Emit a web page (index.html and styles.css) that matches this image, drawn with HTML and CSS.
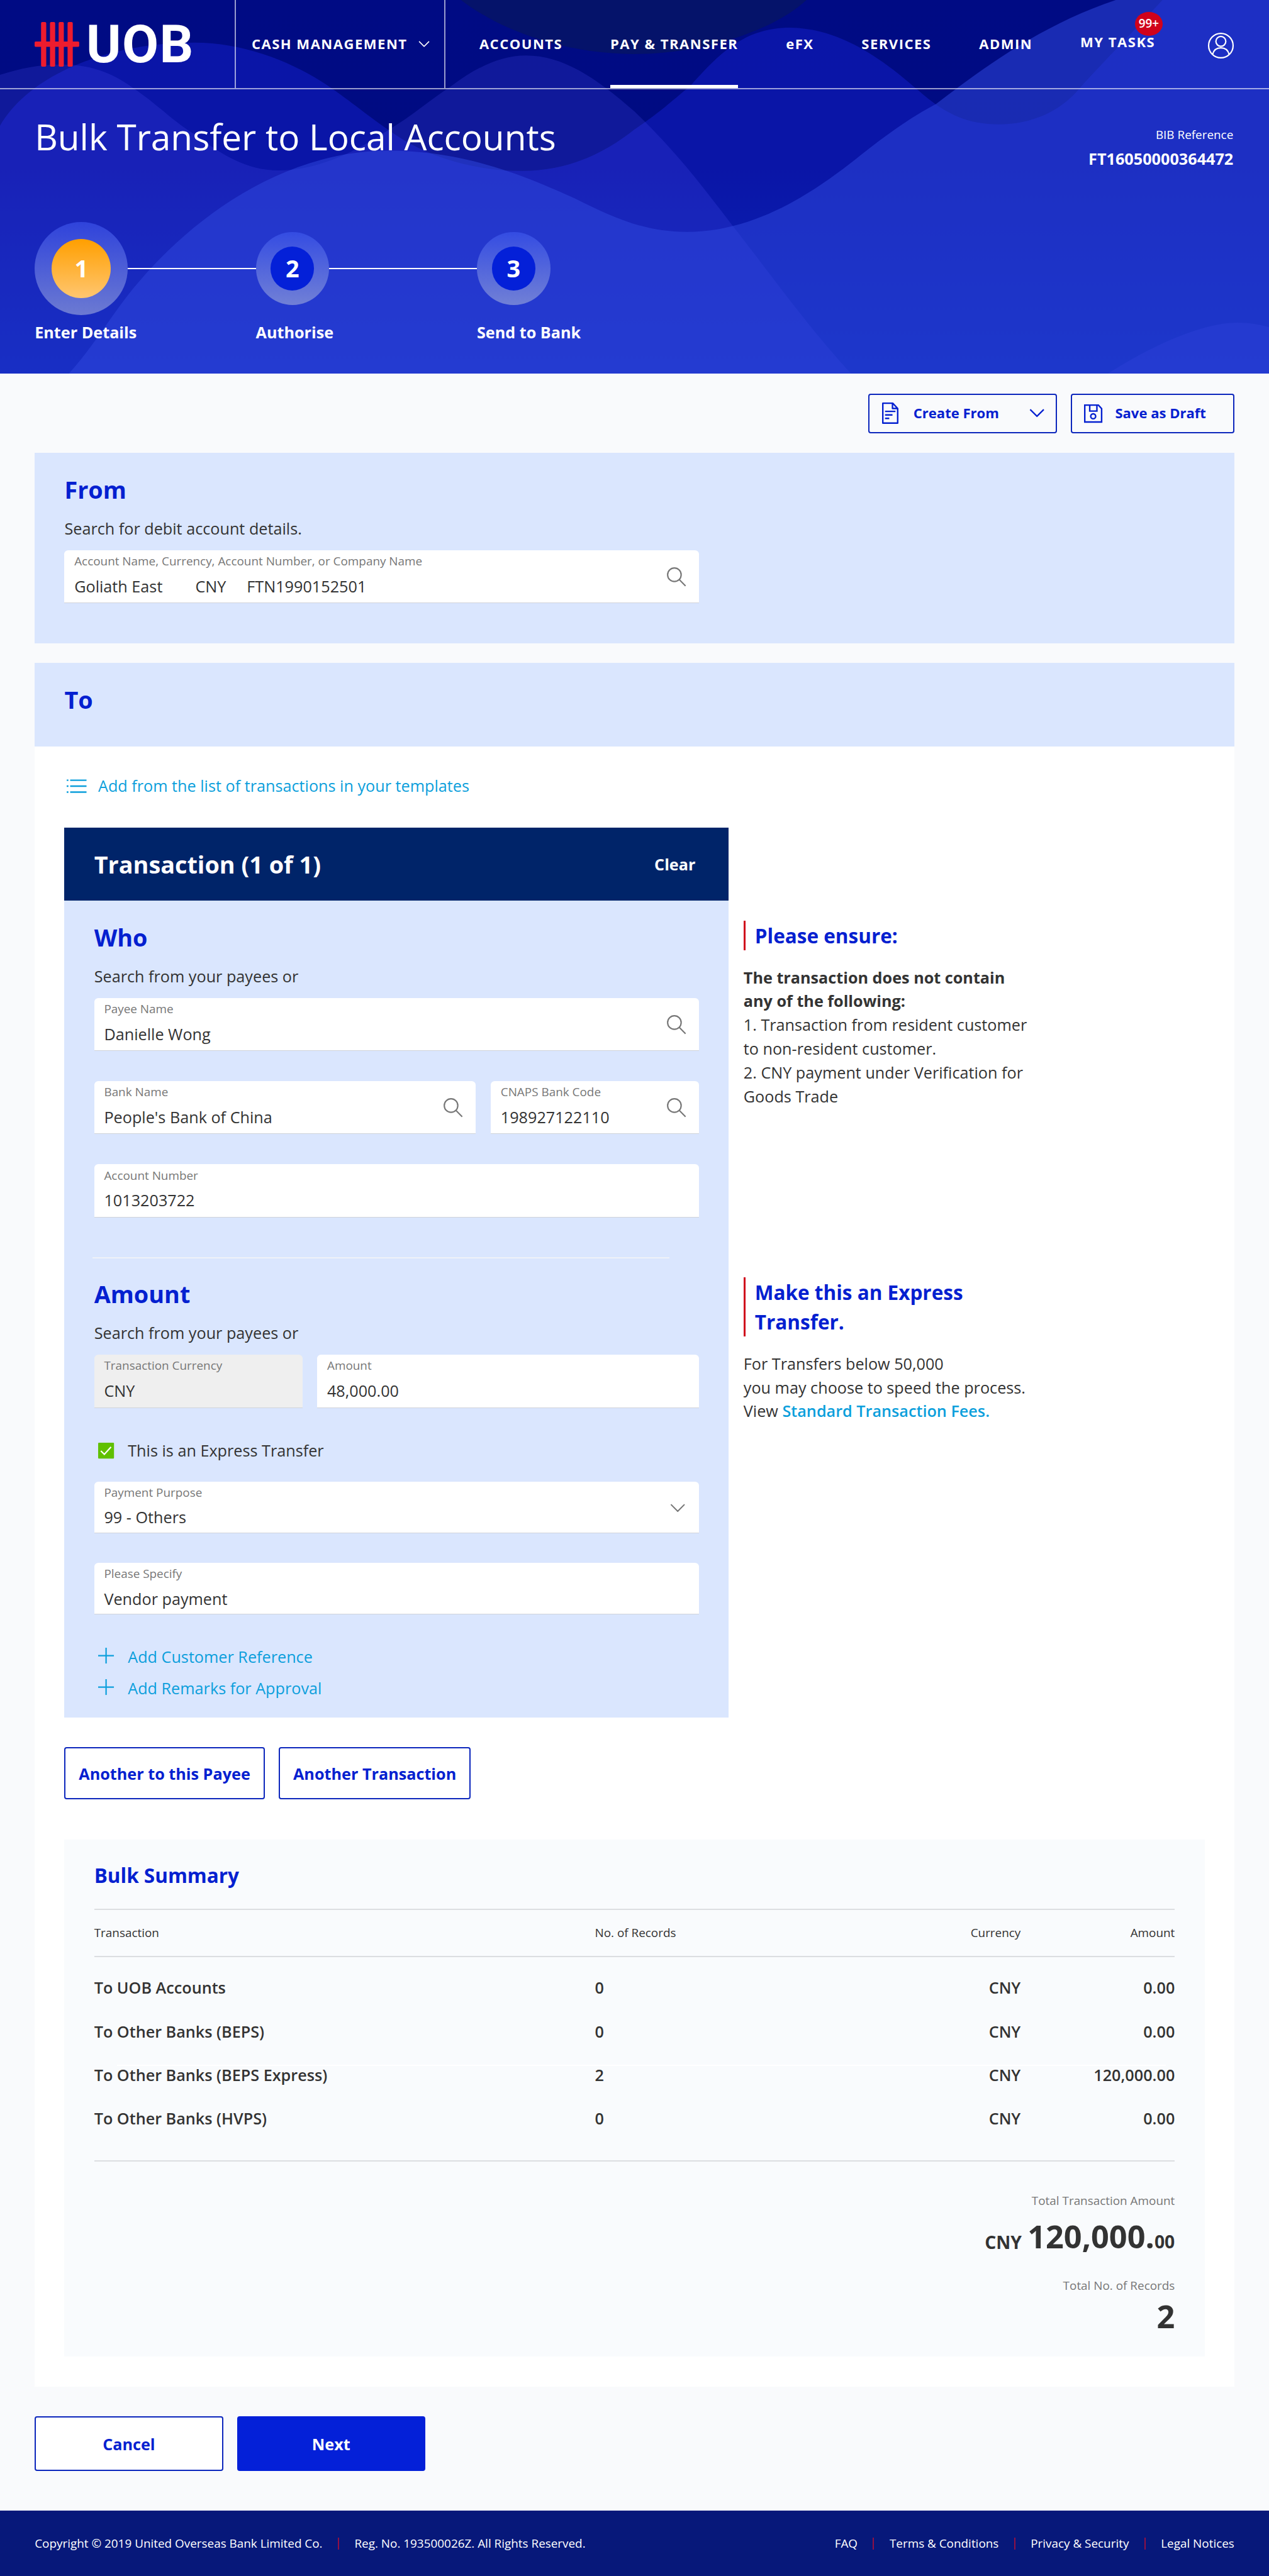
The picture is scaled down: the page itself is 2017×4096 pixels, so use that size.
FILE: index.html
```html
<!DOCTYPE html>
<html lang="en">
<head>
<meta charset="utf-8">
<title>Bulk Transfer to Local Accounts</title>
<link rel="stylesheet" href="styles.css">
</head>
<body>
<svg class="sprite" aria-hidden="true">
  <symbol id="i-search" viewBox="0 0 40 40"><circle cx="15.5" cy="15.5" r="14" /><path d="M25.5 25.5 38.6 38.6"/></symbol>
  <symbol id="i-chevron" viewBox="0 0 32 18"><path d="M1.5 1.5 16 16 30.5 1.5"/></symbol>
  <symbol id="i-plus" viewBox="0 0 32 32"><path d="M16 0V32M0 16H32"/></symbol>
</svg>

<header class="hero">
  <svg class="waves" viewBox="0 0 2560 754" preserveAspectRatio="none" aria-hidden="true">
    <path class="wave-dark" d="M930 0C1010 62 1140 109 1279 109S1560 62 1627 0Z"/>
    <path class="wave-a" d="M0 254C60 150 220 86 392 86C500 86 600 130 669 178C720 214 750 240 784 262C850 312 950 345 1053 345C1150 345 1225 305 1280 261C1330 228 1360 200 1394 172C1450 110 1500 56 1594 56C1700 56 1790 128 1851 181C1900 225 1945 251 2015 251C2080 251 2140 225 2178 178C2240 110 2290 60 2345 0H2560V754H0Z"/>
    <path class="wave-b" d="M0 151C40 138 80 130 122 130C180 130 225 145 269 178C320 212 345 242 392 271C445 310 495 344 563 344C650 344 735 295 784 262C830 235 870 200 910 174C960 136 1010 112 1061 112C1135 112 1200 155 1280 225C1370 312 1420 380 1476 453C1560 560 1630 660 1717 754H0Z"/>
    <path class="wave-b" d="M2235 754C2310 705 2420 651 2496 651C2520 651 2540 655 2560 660V754Z"/>
    <path class="wave-c" d="M139 754C200 685 230 625 286 562C400 430 580 304 784 304C950 304 1080 365 1159 400C1240 440 1300 468 1386 468C1560 468 1700 340 1770 287C1820 250 1850 230 1888 210C1980 140 2100 50 2251 0H2560V754Z"/>
  </svg>

  <nav class="nav">
    <a class="logo" href="#">
      <svg class="logo-mark" viewBox="0 0 90 90" aria-hidden="true">
        <rect x="0" y="39.500" width="90" height="10.500" rx="2"/>
        <rect x="13" y="0" width="10.500" height="90" rx="2.500"/><rect x="31" y="0" width="10.500" height="90" rx="2.500"/>
        <rect x="48.500" y="0" width="10.500" height="90" rx="2.500"/><rect x="66.500" y="0" width="10.500" height="90" rx="2.500"/>
      </svg>
      <span class="logo-text">UOB</span>
    </a>
    <a class="switcher" href="#">CASH MANAGEMENT <svg class="nav-chevron"><use href="#i-chevron"/></svg></a>
    <div class="menu">
      <a class="menu-item" href="#">ACCOUNTS</a>
      <a class="menu-item active" href="#">PAY &amp; TRANSFER</a>
      <a class="menu-item" href="#">eFX</a>
      <a class="menu-item" href="#">SERVICES</a>
      <a class="menu-item" href="#">ADMIN</a>
      <a class="menu-item tasks" href="#">MY TASKS<span class="badge">99+</span></a>
      <svg class="profile" viewBox="0 0 52 52" aria-hidden="true"><circle cx="26" cy="26" r="24.7"/><circle cx="26" cy="17.5" r="10"/><path d="M9.5 43.5C11.5 35 18 30.500 26 30.500S40.500 35 42.500 43.500"/></svg>
    </div>
  </nav>

  <div class="title-row">
    <h1 class="title">Bulk Transfer to Local Accounts</h1>
    <div class="reference">
      <div class="reference-label">BIB Reference</div>
      <div class="reference-no">FT16050000364472</div>
    </div>
  </div>

  <ol class="steps">
    <li class="step current"><div class="step-track"><span class="step-ring"><span class="step-no">1</span></span><span class="step-line"></span></div><div class="step-label">Enter Details</div></li>
    <li class="step"><div class="step-track"><span class="step-ring"><span class="step-no">2</span></span><span class="step-line"></span></div><div class="step-label">Authorise</div></li>
    <li class="step"><div class="step-track"><span class="step-ring"><span class="step-no">3</span></span></div><div class="step-label">Send to Bank</div></li>
  </ol>
</header>

<main class="page">
  <div class="toolbar">
    <button class="tool create">
      <svg class="doc-icon" viewBox="0 0 33 43"><path d="M1.500 1.500H21.500L31.500 12V41.500H1.500ZM21 1.500V12H31.500M6 18H27M6 25H21M6 32H14.500"/></svg>
      <span>Create From</span>
      <svg class="tool-chevron"><use href="#i-chevron"/></svg>
    </button>
    <button class="tool save">
      <svg class="disk-icon" viewBox="0 0 37 37"><path d="M1.500 1.500H29L35.500 8.500V35.500H1.500ZM11.500 1.500V13.500H26V1.500"/><circle cx="18.500" cy="24" r="5"/></svg>
      <span>Save as Draft</span>
    </button>
  </div>

  <section class="panel from">
    <h2 class="heading">From</h2>
    <p class="hint">Search for debit account details.</p>
    <div class="field">
      <div class="field-label">Account Name, Currency, Account Number, or Company Name</div>
      <div class="field-value account"><span>Goliath East</span><span>CNY</span><span>FTN1990152501</span></div>
      <svg class="search"><use href="#i-search"/></svg>
    </div>
  </section>

  <section class="to">
    <div class="panel to-head"><h2 class="heading">To</h2></div>
    <div class="to-body">
      <a class="template-link" href="#">
        <svg class="list-icon" viewBox="0 0 40 28"><path d="M7 2H40M7 14H40M7 26H40M0 2H3.500M0 14H3.500M0 26H3.500"/></svg>
        Add from the list of transactions in your templates
      </a>

      <div class="columns">
        <div class="card">
          <div class="card-head"><h3 class="card-title">Transaction (1 of 1)</h3><a class="clear" href="#">Clear</a></div>
          <div class="card-body">
            <h2 class="heading">Who</h2>
            <p class="hint">Search from your payees or</p>
            <div class="stack">
              <div class="field"><div class="field-label">Payee Name</div><div class="field-value">Danielle Wong</div><svg class="search"><use href="#i-search"/></svg></div>
              <div class="pair">
                <div class="field"><div class="field-label">Bank Name</div><div class="field-value">People's Bank of China</div><svg class="search"><use href="#i-search"/></svg></div>
                <div class="field narrow"><div class="field-label">CNAPS Bank Code</div><div class="field-value">198927122110</div><svg class="search"><use href="#i-search"/></svg></div>
              </div>
              <div class="field"><div class="field-label">Account Number</div><div class="field-value">1013203722</div></div>
            </div>
            <div class="divider"></div>
            <h2 class="heading">Amount</h2>
            <p class="hint">Search from your payees or</p>
            <div class="pair">
              <div class="field narrow disabled"><div class="field-label">Transaction Currency</div><div class="field-value">CNY</div></div>
              <div class="field"><div class="field-label">Amount</div><div class="field-value">48,000.00</div></div>
            </div>
            <div class="check-row">
              <svg class="checkbox" viewBox="0 0 32 32"><rect width="32" height="32" rx="1.500"/><path d="M5.500 16.500 12.500 23.500 26 8.500"/></svg>
              This is an Express Transfer
            </div>
            <div class="stack low">
              <div class="field"><div class="field-label">Payment Purpose</div><div class="field-value">99 - Others</div><svg class="field-chevron"><use href="#i-chevron"/></svg></div>
              <div class="field"><div class="field-label">Please Specify</div><div class="field-value">Vendor payment</div></div>
            </div>
            <div class="adders">
              <a class="adder" href="#"><svg class="plus"><use href="#i-plus"/></svg>Add Customer Reference</a>
              <a class="adder" href="#"><svg class="plus"><use href="#i-plus"/></svg>Add Remarks for Approval</a>
            </div>
          </div>
        </div>

        <aside class="notes">
          <div class="note first">
            <h4 class="note-title">Please ensure:</h4>
            <p class="note-text"><b>The transaction does not contain<br>any of the following:</b><br>1. Transaction from resident customer<br>to non-resident customer.<br>2. CNY payment under Verification for<br>Goods Trade</p>
          </div>
          <div class="note">
            <h4 class="note-title">Make this an Express<br>Transfer.</h4>
            <p class="note-text">For Transfers below 50,000<br>you may choose to speed the process.<br>View <a class="fees" href="#">Standard Transaction Fees.</a></p>
          </div>
        </aside>
      </div>

      <div class="more">
        <button class="btn payee">Another to this Payee</button>
        <button class="btn another">Another Transaction</button>
      </div>

      <section class="summary">
        <h3 class="summary-title">Bulk Summary</h3>
        <div class="row head"><span>Transaction</span><span>No. of Records</span><span>Currency</span><span>Amount</span></div>
        <div class="rows">
          <div class="row"><span>To UOB Accounts</span><span>0</span><span>CNY</span><span>0.00</span></div>
          <div class="row"><span>To Other Banks (BEPS)</span><span>0</span><span>CNY</span><span>0.00</span></div>
          <div class="row express"><span>To Other Banks (BEPS Express)</span><span>2</span><span>CNY</span><span>120,000.00</span></div>
          <div class="row"><span>To Other Banks (HVPS)</span><span>0</span><span>CNY</span><span>0.00</span></div>
        </div>
        <div class="totals">
          <div class="total-label">Total Transaction Amount</div>
          <div class="total-amount"><span class="ccy">CNY</span> 120,000.<span class="cents">00</span></div>
          <div class="total-label">Total No. of Records</div>
          <div class="total-count">2</div>
        </div>
      </section>
    </div>
  </section>

  <div class="actions">
    <button class="btn cancel">Cancel</button>
    <button class="btn next">Next</button>
  </div>
</main>

<footer class="footer">
  <div class="footer-group"><span>Copyright © 2019 United Overseas Bank Limited Co.</span><span>Reg. No. 193500026Z. All Rights Reserved.</span></div>
  <div class="footer-group"><a href="#">FAQ</a><a href="#">Terms &amp; Conditions</a><a href="#">Privacy &amp; Security</a><a href="#">Legal Notices</a></div>
</footer>
</body>
</html>
```
FILE: styles.css
```css
/* 1rem is ten units of the 2560-unit wide layout grid */
html { font-size: 7.87890625px; }
*, *::before, *::after { box-sizing: border-box; }
body {
  margin: 0;
  font-family: "Open Sans", "Noto Sans", sans-serif;
  font-size: 3.2rem;
  line-height: 4.8rem;
  color: #333;
  background: #f9fafc;
}
h1, h2, h3, h4, p, ol { margin: 0; padding: 0; }
ol { list-style: none; }
a { color: inherit; text-decoration: none; }
svg { display: block; flex: none; fill: none; stroke: currentColor; overflow: visible; }
button { font: inherit; padding: 0; }
.sprite { position: absolute; width: 0; height: 0; }

/* Hero */
.hero {
  position: relative;
  height: 75.4rem;
  color: #fff;
  background: linear-gradient(#000b84 0%, #000b82 45%, #002ca4 100%);
  overflow: hidden;
}
.waves { position: absolute; inset: 0; width: 100%; height: 100%; stroke: none; }
.wave-dark { fill: #05136a; }
.wave-a { fill: rgba(20, 31, 204, .5); }
.wave-b { fill: rgba(80, 85, 250, .2); }
.wave-c { fill: rgba(46, 70, 220, .54); }

.nav {
  position: relative;
  display: flex;
  height: 18rem;
  border-bottom: .26rem solid rgba(255, 255, 255, .6);
  font-size: 2.8rem;
  font-weight: 700;
  letter-spacing: .19rem;
}
.logo { display: flex; align-items: center; gap: 1.4rem; width: 47.3rem; padding-left: 7rem; }
.logo-mark { width: 9rem; height: 9rem; fill: #ee1c2e; stroke: none; margin-top: .2rem; }
.logo-text {
  margin-top: .3rem;
  font-family: Roboto, sans-serif;
  font-size: 10.7rem;
  line-height: 1;
  font-weight: 700;
  letter-spacing: .18rem;
}
.switcher {
  display: flex;
  align-items: center;
  gap: 2.2rem;
  width: 42.5rem;
  padding-left: 3.2rem;
  border: solid rgba(255, 255, 255, .6);
  border-width: 0 .26rem;
  white-space: nowrap;
}
.nav-chevron { width: 2.3rem; height: 1.25rem; stroke-width: 3; }
.menu { display: flex; align-items: stretch; flex: 1; gap: 9.62rem; padding: 0 7.1rem 0 6.9rem; }
.menu-item { display: flex; align-items: center; white-space: nowrap; }
.active { border: solid #fff; border-width: 0 0 .64rem; padding-top: .64rem; }
.tasks { position: relative; padding-bottom: .7rem; }
.badge {
  position: absolute;
  top: 2.4rem;
  right: -1.5rem;
  width: 5.6rem;
  height: 4.8rem;
  border-radius: 50%;
  background: #d0021b;
  font-size: 2.4rem;
  line-height: 4.8rem;
  letter-spacing: 0;
  font-weight: 600;
  text-align: center;
}
.profile { width: 5.2rem; height: 5.2rem; align-self: center; stroke-width: 2.8; margin: .7rem 0 0 auto; }

.title-row { position: relative; display: flex; justify-content: space-between; padding: 4.9rem 7.2rem 0 7rem; height: 26.8rem; }
.title { font-size: 7.2rem; line-height: 9.6rem; font-weight: 400; }
.reference { padding-top: 2.47rem; text-align: right; }
.reference-label { font-size: 2.4rem; line-height: 3.6rem; }
.reference-no { margin-top: .9rem; line-height: 4.4rem; font-weight: 700; }

.steps { position: relative; display: flex; padding-left: 7rem; }
.step { width: 44.6rem; }
.step-track { display: flex; align-items: center; height: 18.8rem; }
.step-ring {
  display: flex; align-items: center; justify-content: center; flex: none;
  width: 14.8rem; height: 14.8rem; border-radius: 50%;
  background: linear-gradient(#344ce2, #7180d6);
}
.step-no {
  width: 8.8rem; height: 8.8rem; border-radius: 50%;
  background: #0420d8;
  font-size: 4.8rem; line-height: 8.8rem; font-weight: 700; text-align: center;
}
.current .step-ring { width: 18.8rem; height: 18.8rem; background: linear-gradient(#2f43db, #6c7ad2); }
.current .step-no { width: 12rem; height: 12rem; line-height: 12rem; background: linear-gradient(#ff9f00, #ffc670); }
.step-line { flex: 1; height: .2rem; background: #fff; }
.step-label { margin-top: 1.1rem; font-weight: 700; }

/* Page */
.page { padding: 4rem 7rem 8rem; }
.toolbar { display: flex; justify-content: flex-end; gap: 2.8rem; margin-bottom: 4rem; }
.tool {
  display: flex; align-items: center;
  height: 8rem;
  border: .26rem solid #0c26bc;
  border-radius: .5rem;
  background: none;
  color: #0420d0;
  font-size: 2.8rem; font-weight: 700;
}
.create { width: 38rem; padding: 0 2.2rem 0 2.5rem; }
.save { width: 33rem; padding-left: 2.4rem; }
.doc-icon { width: 3.3rem; height: 4.3rem; stroke-width: 3; stroke-linejoin: round; margin-right: 3rem; }
.disk-icon { width: 3.7rem; height: 3.7rem; stroke-width: 3; margin-right: 2.6rem; }
.tool-chevron { width: 3.1rem; height: 1.7rem; stroke-width: 3; margin-left: auto; }

.panel { background: #dae6fe; padding: 4.3rem 6rem 0; }
.from { height: 38.4rem; margin-bottom: 4rem; }
.from .field { width: 128rem; }
.heading { font-size: 4.8rem; line-height: 6.4rem; font-weight: 700; color: #0420d0; }
.hint { margin: 2.25rem 0 1.9rem; }

.field {
  position: relative;
  height: 10.7rem;
  padding: .65rem 2rem 0;
  background: #fff;
  border-bottom: .2rem solid #cfd3da;
  border-radius: .8rem .8rem 0 0;
}
.field-label { font-size: 2.4rem; line-height: 3.2rem; color: #777; }
.field-value { margin-top: 1.2rem; line-height: 4.4rem; }
.account { display: grid; grid-template-columns: 24.4rem 10.4rem auto; }
.search { position: absolute; right: 2.6rem; top: 3.4rem; width: 3.9rem; height: 3.9rem; color: #777; stroke-width: 2.8; }
.field-chevron { position: absolute; right: 2.7rem; top: 4.5rem; width: 3.1rem; height: 1.7rem; color: #777; stroke-width: 2.8; }
.disabled { background: #efefef; }

.to-head { height: 16.8rem; }
.to-body { background: #fff; padding: 5.7rem 6rem 6.05rem; }
.template-link { display: flex; align-items: center; gap: 2.4rem; padding-left: .4rem; color: #0c9fdc; }
.list-icon { width: 4rem; height: 2.8rem; stroke-width: 3; }

.columns { display: grid; grid-template-columns: 134rem 1fr; gap: 3rem; margin-top: 5.9rem; }
.card { height: 179.6rem; background: #dae6fe; }
.card-head {
  display: flex; align-items: center; justify-content: space-between;
  height: 14.8rem; padding: .2rem 6.7rem 0 6rem;
  background: #002469; color: #fff;
}
.card-title { font-size: 4.8rem; font-weight: 700; }
.clear { font-weight: 700; }
.card-body { padding: 4.25rem 6rem 0; }
.card-body .hint { margin: 2.2rem 0 1.95rem; }
.stack { display: grid; gap: 6.1rem; }
.pair { display: flex; gap: 3rem; }
.pair .field { flex: 1; }
.pair .narrow { flex: 0 0 42rem; }
.divider { width: 116.4rem; height: .25rem; margin: 8rem 0 4.15rem -.35rem; background: #eff2f8; }
.check-row { display: flex; align-items: center; gap: 2.8rem; margin: 6.25rem 0 3.8rem; padding-left: .8rem; }
.checkbox { width: 3.2rem; height: 3.2rem; stroke: none; fill: #60c000; }
.checkbox path { fill: none; stroke: #fff; stroke-width: 2.8; }
.low { gap: 6rem; }
.low .field { height: 10.4rem; }
.adders { display: grid; gap: 1.56rem; margin-top: 6.2rem; padding-left: .8rem; color: #0c9fdc; }
.adder { display: flex; align-items: center; gap: 2.8rem; }
.plus { width: 3.2rem; height: 3.2rem; stroke-width: 2.8; margin-top: -.6rem; }

.notes { padding-top: 18.8rem; }
.first { height: 71.96rem; }
.note-title { padding-left: 1.9rem; border-left: .4rem solid #d0021b; font-size: 4rem; line-height: 6rem; font-weight: 700; color: #0420d0; }
.note-text { margin-top: 3.1rem; }
.fees { color: #0c9fdc; font-weight: 600; }

.btn {
  height: 10.5rem;
  padding-top: .3rem;
  border: .26rem solid #0c26bc;
  border-radius: .5rem;
  background: #fff;
  color: #0420d0;
  font-weight: 700;
}
.more { display: flex; gap: 2.8rem; margin-top: 6rem; }
.payee { width: 40.4rem; }
.another { width: 38.8rem; }

.summary { height: 104.4rem; margin-top: 8.1rem; padding: 4.2rem 6rem 0; background: #f9fbfd; }
.summary-title { font-size: 4rem; line-height: 6rem; font-weight: 700; color: #0420d0; margin-bottom: 3.8rem; }
.row { display: grid; grid-template-columns: 101rem 38rem 1fr 31.1rem; line-height: 8.8rem; font-weight: 600; }
.row span:nth-child(n + 3) { text-align: right; }
.head { border: solid #dcdee1; border-width: .26rem 0; font-size: 2.4rem; line-height: 9.3rem; font-weight: 400; }
.rows { padding: 1.8rem 0 4rem; border-bottom: .26rem solid #dcdee1; }
.express { background: linear-gradient(#fff, #fff) 4.6rem 2.3rem / 211.6rem .26rem no-repeat; }
.totals { text-align: right; font-weight: 700; padding-top: 6.1rem; }
.total-label { font-size: 2.4rem; line-height: 3.6rem; font-weight: 400; color: #777; }
.total-amount { margin: .9rem 0 3.87rem; height: 8.8rem; font-size: 6.4rem; line-height: 8.8rem; word-spacing: -.5rem; }
.ccy, .cents { font-size: 3.6rem; line-height: 1; }
.ccy { vertical-align: -.15rem; }
.total-count { font-size: 6.4rem; line-height: 8.6rem; }

.actions { display: flex; gap: 2.8rem; margin-top: 6rem; }
.actions .btn { width: 38rem; height: 11rem; }
.actions .next { background: #0420d8; border-color: #0420d8; color: #fff; }

.footer {
  display: flex; align-items: center; justify-content: space-between;
  height: 13.25rem; padding: .25rem 7rem 0;
  background: #07187a; color: #fff;
  font-size: 2.4rem; line-height: 2.4rem;
}
.footer-group { display: flex; }
.footer-group > * + * { margin-left: 3.1rem; padding-left: 3.1rem; border-left: .26rem solid #901045; }
```
